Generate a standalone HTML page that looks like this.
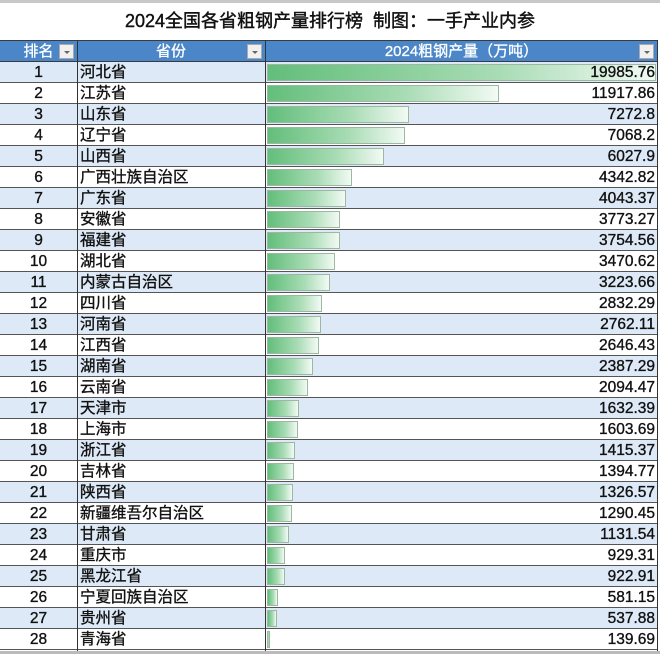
<!DOCTYPE html>
<html><head><meta charset="utf-8"><style>
*{margin:0;padding:0;box-sizing:border-box}
body{width:660px;height:654px;background:#fff;font-family:"Liberation Sans","Noto Sans CJK SC",sans-serif;position:relative;overflow:hidden}
.top{position:absolute;left:0;top:0;width:660px;height:3px;background:#c8c8c8}
.title{position:absolute;left:0;top:6px;width:660px;text-align:center;font-size:18px;color:#111;line-height:30px;-webkit-text-stroke:0.4px #111}
.hdr{position:absolute;top:40px;height:22px;background:#4a86c8;color:#fff;font-size:15px;line-height:22px;text-align:center;border-top:1px solid #3b3b3b;border-bottom:1px solid #3b3b3b;-webkit-text-stroke:0.3px #fff}
.dd{position:absolute;top:3px;width:15px;height:15px;background:#f0f0f0;border:1px solid #aaa}
.dd:after{content:"";position:absolute;left:4px;top:6px;border-left:3px solid transparent;border-right:3px solid transparent;border-top:3px solid #666}
.row{position:absolute;left:0;width:658px;height:21px;border-bottom:1px solid #555;font-size:15.5px;color:#111;line-height:22px;-webkit-text-stroke:0.35px #111}
.row.o{background:#dde9f6}
.c1{position:absolute;left:0;width:77px;text-align:center}
.c2{position:absolute;left:80px}
.c3{position:absolute;right:3px}
.bar{position:absolute;left:267px;top:2px;height:17px;background:linear-gradient(90deg,#63be7b,#a9dcb5 60%,#f2faf4);border:1px solid #9cb8a3;-webkit-text-stroke:0}
.vl{position:absolute;top:40px;width:1px;height:611px;background:#333}
.bot{position:absolute;left:0;top:651px;width:660px;height:3px;background:#bbb}
</style></head><body>
<div class="top"></div>
<div class="title">2024全国各省粗钢产量排行榜&nbsp; 制图：一手产业内参</div>
<div class="hdr" style="left:0;width:77px">排名<div class="dd" style="left:59px"></div></div>
<div class="hdr" style="left:77px;width:188px">省份<div class="dd" style="left:170px"></div></div>
<div class="hdr" style="left:265px;width:393px">2024粗钢产量（万吨）<div class="dd" style="left:374px"></div></div>
<div id="rows"></div>
<div class="vl" style="left:77px"></div>
<div class="vl" style="left:265px"></div>
<div class="vl" style="left:657px"></div>
<div class="bot"></div>
<script>
var d=[["河北省",19985.76],["江苏省",11917.86],["山东省",7272.8],["辽宁省",7068.2],["山西省",6027.9],["广西壮族自治区",4342.82],["广东省",4043.37],["安徽省",3773.27],["福建省",3754.56],["湖北省",3470.62],["内蒙古自治区",3223.66],["四川省",2832.29],["河南省",2762.11],["江西省",2646.43],["湖南省",2387.29],["云南省",2094.47],["天津市",1632.39],["上海市",1603.69],["浙江省",1415.37],["吉林省",1394.77],["陕西省",1326.57],["新疆维吾尔自治区",1290.45],["甘肃省",1131.54],["重庆市",929.31],["黑龙江省",922.91],["宁夏回族自治区",581.15],["贵州省",537.88],["青海省",139.69]];
var h="";
d.forEach(function(r,i){var w=Math.max(3,Math.round(r[1]/19985.76*389));
h+='<div class="row'+(i%2==0?' o':'')+'" style="top:'+(62+i*21)+'px"><div class="bar" style="width:'+w+'px"></div><span class="c1">'+(i+1)+'</span><span class="c2">'+r[0]+'</span><span class="c3">'+r[1]+'</span></div>';});
document.getElementById("rows").innerHTML=h;
</script>
</body></html>
